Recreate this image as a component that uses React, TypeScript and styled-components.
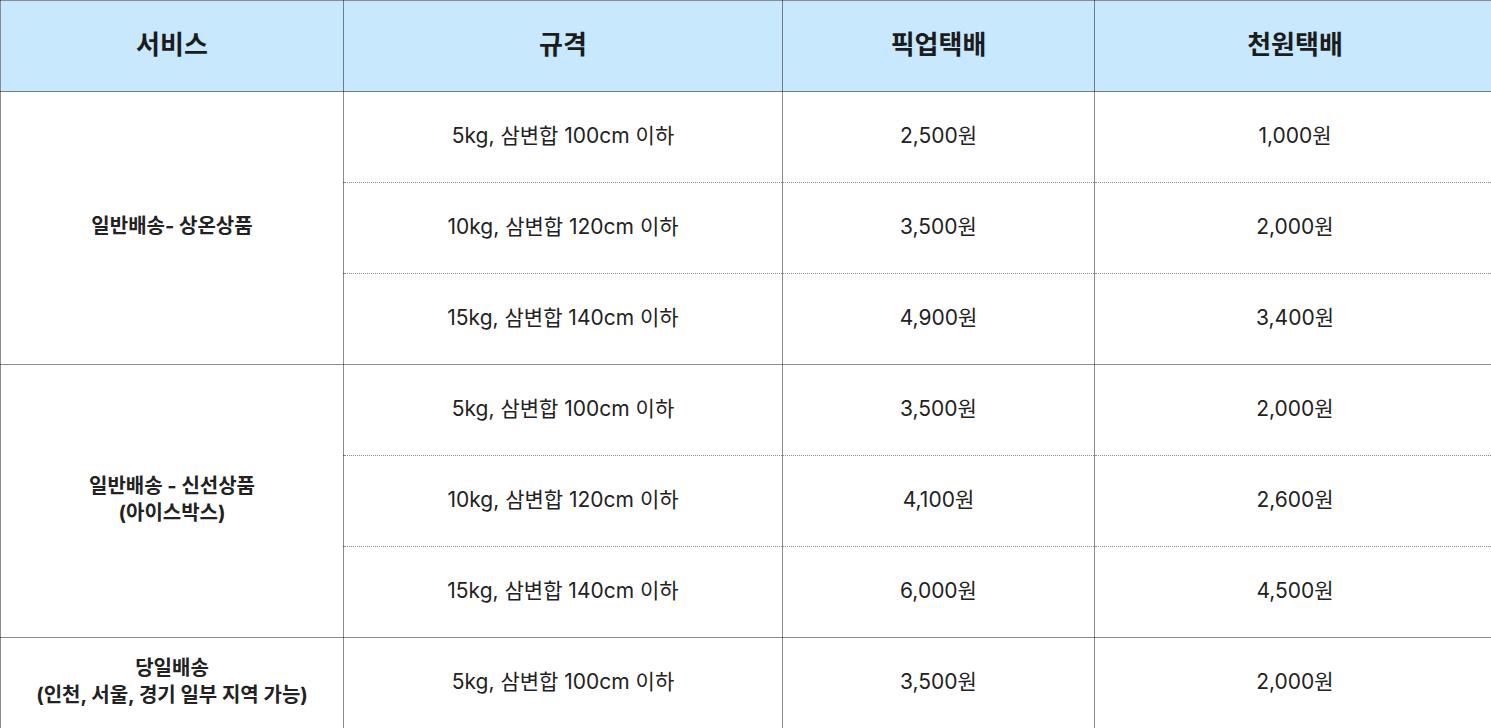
import React from "react";
import styled, { createGlobalStyle } from "styled-components";

const GlobalStyle = createGlobalStyle`
  html, body {
    margin: 0;
    padding: 0;
    background: #ffffff;
  }
  body {
    font-family: Inter, "Noto Sans CJK KR", sans-serif;
    color: #222222;
  }
`;

const LINE = "rgba(0, 0, 0, 0.45)";

const Table = styled.table`
  width: 1491px;
  height: 728px;
  border-collapse: collapse;
  table-layout: fixed;
`;

const Row = styled.tr`
  height: 91px;
`;

const HeadCell = styled.th<{ $w: number }>`
  width: ${(p) => p.$w}px;
  background: #c7e8fd;
  border: 1px solid ${LINE};
  font-size: 26px;
  font-weight: 700;
  line-height: 30px;
  color: #1c1c1c;
  text-align: center;
  vertical-align: middle;
  padding: 0 0 2px;
`;

const ServiceCell = styled.td`
  border: 1px solid ${LINE};
  font-size: 20px;
  font-weight: 700;
  line-height: 27px;
  color: #222222;
  text-align: center;
  vertical-align: middle;
  padding: 0 0 3px;
`;

const Cell = styled.td<{ $last: boolean }>`
  border-left: 1px solid ${LINE};
  border-right: 1px solid ${LINE};
  border-top: 1px dotted ${LINE};
  border-bottom: ${(p) =>
    p.$last ? `1px solid ${LINE}` : `1px dotted ${LINE}`};
  font-size: 21px;
  font-weight: 400;
  line-height: 26px;
  color: #222222;
  text-align: center;
  vertical-align: middle;
  padding: 0 0 2px;
`;

interface PriceRow {
  spec: string;
  pickup: string;
  cheon: string;
}

interface ServiceGroup {
  name: string[];
  rows: PriceRow[];
}

const groups: ServiceGroup[] = [
  {
    name: ["일반배송- 상온상품"],
    rows: [
      { spec: "5kg, 삼변합 100cm 이하", pickup: "2,500원", cheon: "1,000원" },
      { spec: "10kg, 삼변합 120cm 이하", pickup: "3,500원", cheon: "2,000원" },
      { spec: "15kg, 삼변합 140cm 이하", pickup: "4,900원", cheon: "3,400원" },
    ],
  },
  {
    name: ["일반배송 - 신선상품", "(아이스박스)"],
    rows: [
      { spec: "5kg, 삼변합 100cm 이하", pickup: "3,500원", cheon: "2,000원" },
      { spec: "10kg, 삼변합 120cm 이하", pickup: "4,100원", cheon: "2,600원" },
      { spec: "15kg, 삼변합 140cm 이하", pickup: "6,000원", cheon: "4,500원" },
    ],
  },
  {
    name: ["당일배송", "(인천, 서울, 경기 일부 지역 가능)"],
    rows: [
      { spec: "5kg, 삼변합 100cm 이하", pickup: "3,500원", cheon: "2,000원" },
    ],
  },
];

const App = () => {
  return (
    <>
      <GlobalStyle />
      <Table>
        <thead>
          <Row>
            <HeadCell $w={342}>서비스</HeadCell>
            <HeadCell $w={438}>규격</HeadCell>
            <HeadCell $w={311}>픽업택배</HeadCell>
            <HeadCell $w={400}>천원택배</HeadCell>
          </Row>
        </thead>
        <tbody>
          {groups.map((g) =>
            g.rows.map((r, i) => {
              const last = i === g.rows.length - 1;
              return (
                <Row key={g.name[0] + i}>
                  {i === 0 ? (
                    <ServiceCell rowSpan={g.rows.length}>
                      {g.name.map((n) => (
                        <div key={n}>{n}</div>
                      ))}
                    </ServiceCell>
                  ) : null}
                  <Cell $last={last}>{r.spec}</Cell>
                  <Cell $last={last}>{r.pickup}</Cell>
                  <Cell $last={last}>{r.cheon}</Cell>
                </Row>
              );
            })
          )}
        </tbody>
      </Table>
    </>
  );
};

export default App;
